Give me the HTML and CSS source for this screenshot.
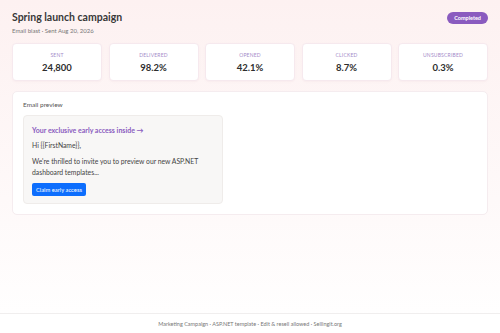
FILE: index.html
```html
<!DOCTYPE html>
<html>
<head>
<meta charset="utf-8">
<link rel="stylesheet" href="styles.css">
</head>
<body>
<div class="layout">
  <main class="page">
    <header class="head">
      <div>
        <h1 class="title">Spring launch campaign</h1>
        <div class="sub">Email blast · Sent Aug 20, 2026</div>
      </div>
      <span class="badge">Completed</span>
    </header>
    <section class="stats">
      <div class="stat"><div class="label">SENT</div><div class="value">24,800</div></div>
      <div class="stat"><div class="label">DELIVERED</div><div class="value">98.2%</div></div>
      <div class="stat"><div class="label">OPENED</div><div class="value">42.1%</div></div>
      <div class="stat"><div class="label">CLICKED</div><div class="value">8.7%</div></div>
      <div class="stat"><div class="label">UNSUBSCRIBED</div><div class="value">0.3%</div></div>
    </section>
    <section class="panel">
      <div class="panel-title">Email preview</div>
      <div class="mail">
        <div class="mail-subject">Your exclusive early access inside →</div>
        <p class="mail-text">Hi {{FirstName}},</p>
        <p class="mail-text">We're thrilled to invite you to preview our new ASP.NET dashboard templates...</p>
        <button class="btn">Claim early access</button>
      </div>
    </section>
  </main>
  <footer class="foot">Marketing Campaign · ASP.NET template · Edit &amp; resell allowed · Sellingit.org</footer>
</div>
</body>
</html>
```
FILE: styles.css
```css
* { box-sizing: border-box; }
html, body { margin: 0; padding: 0; }
body {
  font-family: Lato, "Noto Sans", sans-serif;
  color: #333;
  background: #fff;
}
.layout {
  min-height: 333px;
  display: flex;
  flex-direction: column;
  background: linear-gradient(180deg, #fdf1f1 0%, #fef9f9 60%, #ffffff 100%);
}
.page {
  flex: 1;
  padding: 10px 12px 0;
}
.head {
  display: flex;
  justify-content: space-between;
  align-items: flex-start;
}
.title {
  margin: 0;
  font-size: 10.5px;
  font-weight: 700;
  line-height: 15px;
  color: #383838;
}
.sub {
  font-size: 6px;
  color: #777;
  margin-top: 1px;
  line-height: 9px;
}
.badge {
  margin-top: 2px;
  background: #8a5bbf;
  color: #fff;
  font-size: 5.5px;
  font-weight: 700;
  border-radius: 7px;
  padding: 3px 7px;
  line-height: 6px;
}
.stats {
  margin-top: 8px;
  display: grid;
  grid-template-columns: repeat(5, 1fr);
  gap: 6.5px;
}
.stat {
  background: #fff;
  border: 1px solid #f6e9ee;
  border-radius: 4px;
  height: 38px;
  display: flex;
  flex-direction: column;
  align-items: center;
  padding-top: 8px;
  box-shadow: 0 1px 2px rgba(200,150,170,0.08);
}
.label {
  font-size: 5px;
  color: #a58bc9;
  letter-spacing: 0.2px;
  line-height: 6px;
}
.value {
  font-size: 9.5px;
  font-weight: 700;
  color: #2d2d2d;
  line-height: 14px;
  margin-top: 3px;
}
.panel {
  margin-top: 10px;
  background: #fff;
  border: 1px solid #f5ecef;
  border-radius: 5px;
  padding: 8px 10px 10px;
}
.panel-title {
  font-size: 6.5px;
  color: #555;
  line-height: 9px;
}
.mail {
  margin-top: 6px;
  width: 200px;
  background: #f8f7f6;
  border: 1px solid #efecea;
  border-radius: 4px;
  padding: 9px 8px 7px;
}
.mail-subject {
  font-size: 7px;
  font-weight: 700;
  color: #8a5bbf;
  line-height: 10px;
}
.mail-text {
  margin: 5px 0 0;
  font-size: 6.8px;
  line-height: 11px;
  color: #444;
}
.btn {
  margin-top: 5px;
  background: #0d6efd;
  color: #fff;
  border: 0;
  border-radius: 2px;
  font-family: inherit;
  font-size: 5.8px;
  padding: 3px 4px;
  line-height: 7px;
  display: block;
}
.foot {
  border-top: 1px solid #f0eeee;
  background: #fff;
  height: 20px;
  font-size: 5.5px;
  color: #777;
  text-align: center;
  line-height: 20px;
}
```
